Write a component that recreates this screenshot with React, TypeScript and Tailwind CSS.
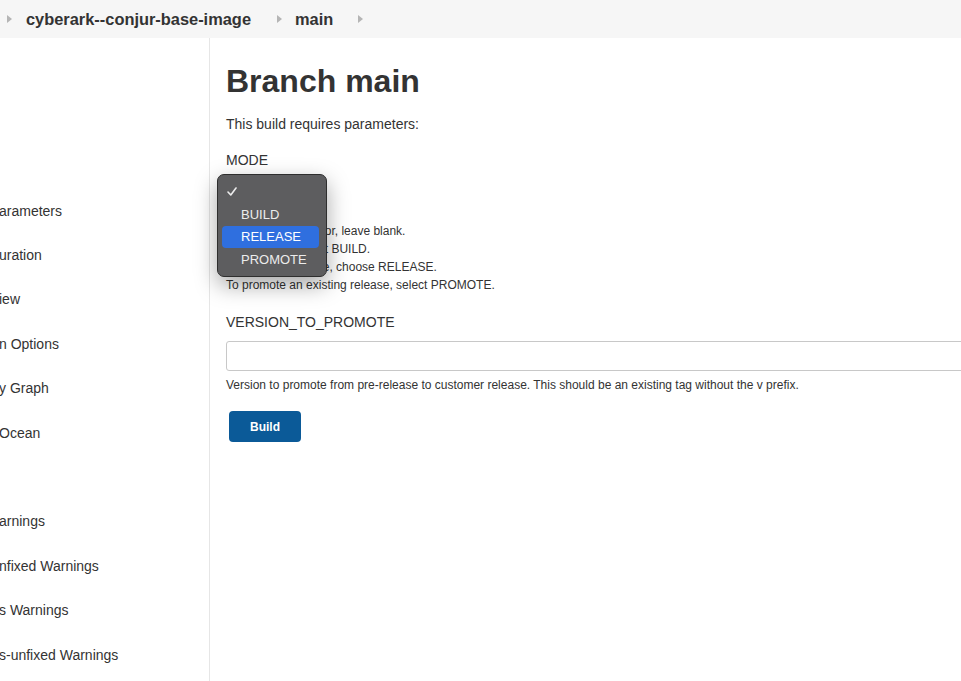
import React from "react";

const sideItems = [
  "arameters",
  "uration",
  "iew",
  "n Options",
  "y Graph",
  "Ocean",
  "",
  "arnings",
  "nfixed Warnings",
  "s Warnings",
  "s-unfixed Warnings",
];

function Caret({ className }: { className: string }) {
  return (
    <svg width="5" height="8" viewBox="0 0 5 8" className={className}>
      <path d="M0 0 L5 4 L0 8 Z" fill="#b5b5b5" />
    </svg>
  );
}

function SelectPopup() {
  return (
    <div className="absolute left-[7px] top-[136px] w-[110px] h-[103px] rounded-[7px] bg-[#5d5d5f] border border-[#2e2e2e] shadow-[0_8px_22px_rgba(0,0,0,0.35)] pt-[5px] px-[4px] text-[13px] text-[#ececec]">
      <div className="h-[23px] flex items-center pl-[5px]">
        <svg width="10" height="9" viewBox="0 0 10 9">
          <path
            d="M1 5 L3.8 8 L9 1"
            fill="none"
            stroke="#ececec"
            strokeWidth="1.6"
            strokeLinecap="round"
            strokeLinejoin="round"
          />
        </svg>
      </div>
      <div className="h-[23px] flex items-center pl-[19px]">BUILD</div>
      <div className="h-[22px] flex items-center pl-[19px] mr-[3px] rounded-[4px] bg-[#2f6fdf] text-white">
        RELEASE
      </div>
      <div className="h-[23px] flex items-center pl-[19px]">PROMOTE</div>
    </div>
  );
}

export default function App() {
  return (
    <div className="w-[961px] h-[681px] overflow-hidden bg-white flex flex-col font-['Liberation_Sans',Arial,sans-serif] text-[#333]">
      <div className="h-[38px] shrink-0 bg-[#f6f6f6] flex items-center">
        <Caret className="ml-[7px]" />
        <span className="ml-[14px] text-[16.4px] font-bold text-[#333]">
          cyberark--conjur-base-image
        </span>
        <Caret className="ml-[26px]" />
        <span className="ml-[13px] text-[16.4px] font-bold text-[#333]">
          main
        </span>
        <Caret className="ml-[25px]" />
      </div>

      <div className="flex flex-1 min-h-0">
        <div className="w-[210px] shrink-0 border-r border-[#e6e6e6] pt-[151px] overflow-hidden">
          {sideItems.map((item, i) => (
            <div
              key={i}
              className="h-[44.4px] flex items-center text-[14px] whitespace-nowrap -ml-[1px]"
            >
              {item}
            </div>
          ))}
        </div>

        <div className="relative flex-1 pl-[16px] pt-[24px]">
          <h1 className="text-[32px] leading-[38px] font-bold">Branch main</h1>
          <p className="mt-[14px] text-[14px] leading-[20px]">
            This build requires parameters:
          </p>
          <div className="mt-[16px] text-[14px] leading-[20px]">MODE</div>
          <div className="h-[52px]" />
          <div className="text-[12px] leading-[18px]">
            <div>To run a snapshot or, leave blank.</div>
            <div>To do builds, select BUILD.</div>
            <div>To cut a full release, choose RELEASE.</div>
            <div>To promote an existing release, select PROMOTE.</div>
          </div>

          <div className="mt-[18px] text-[14px] leading-[20px]">
            VERSION_TO_PROMOTE
          </div>
          <input
            type="text"
            className="mt-[9px] block w-[760px] h-[30px] rounded-[3px] border border-[#c8c8c8] bg-white"
          />
          <p className="mt-[5px] text-[12px] leading-[18px] whitespace-nowrap">
            Version to promote from pre-release to customer release. This
            should be an existing tag without the v prefix.
          </p>
          <button className="mt-[17px] ml-[3px] w-[72px] h-[31px] rounded-[4px] bg-[#0b5a98] text-white text-[12px] font-bold">
            Build
          </button>

          <SelectPopup />
        </div>
      </div>
    </div>
  );
}
